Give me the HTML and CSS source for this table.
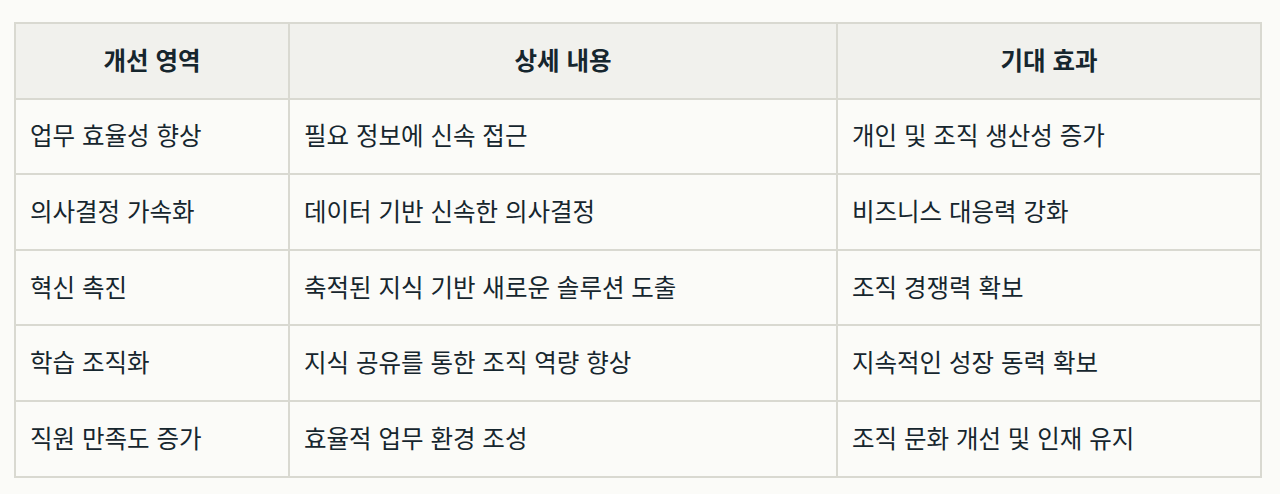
FILE: index.html
```html
<!DOCTYPE html>
<html lang="ko">
<head>
<meta charset="utf-8">
<link rel="stylesheet" href="styles.css">
</head>
<body>
<main class="page">
<table class="grid">
<colgroup><col class="c1"><col class="c2"><col class="c3"></colgroup>
<thead>
<tr><th>개선 영역</th><th>상세 내용</th><th>기대 효과</th></tr>
</thead>
<tbody>
<tr><td>업무 효율성 향상</td><td>필요 정보에 신속 접근</td><td>개인 및 조직 생산성 증가</td></tr>
<tr><td>의사결정 가속화</td><td>데이터 기반 신속한 의사결정</td><td>비즈니스 대응력 강화</td></tr>
<tr><td>혁신 촉진</td><td>축적된 지식 기반 새로운 솔루션 도출</td><td>조직 경쟁력 확보</td></tr>
<tr><td>학습 조직화</td><td>지식 공유를 통한 조직 역량 향상</td><td>지속적인 성장 동력 확보</td></tr>
<tr><td>직원 만족도 증가</td><td>효율적 업무 환경 조성</td><td>조직 문화 개선 및 인재 유지</td></tr>
</tbody>
</table>
</main>
</body>
</html>
```
FILE: styles.css
```css
html, body { margin: 0; padding: 0; background: #fbfbf8; }
.page { padding: 22px 18px 0 14px; }
.grid {
  width: 1248px;
  border-collapse: collapse;
  font-family: "Noto Sans CJK KR", "Noto Sans", sans-serif;
  font-size: 24.5px;
  color: #16262e;
}
.c1 { width: 274px; }
.c2 { width: 548px; }
.grid th, .grid td {
  border: 2px solid #d9d9d1;
  height: 75.6px;
  padding: 0 14px 3px;
  box-sizing: border-box;
}
.grid th {
  background: #f1f1ed;
  font-weight: 700;
  text-align: center;
}
.grid td { text-align: left; }
```
